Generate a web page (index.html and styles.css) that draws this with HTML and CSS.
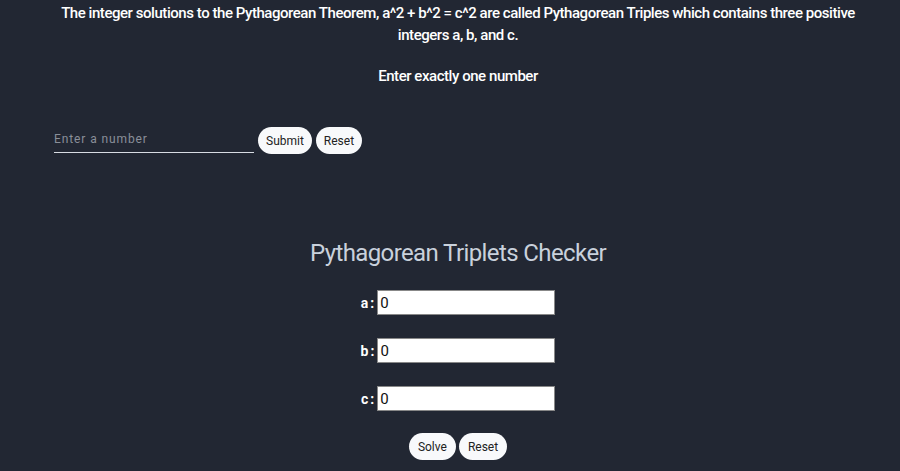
FILE: index.html
```html
<!DOCTYPE html>
<html>
<head>
<meta charset="utf-8">
<link rel="stylesheet" href="styles.css">
</head>
<body>
<p class="intro">The integer solutions to the Pythagorean Theorem, a^2 + b^2 = c^2 are called Pythagorean Triples which contains three positive integers a, b, and c.</p>
<p class="prompt">Enter exactly one number</p>
<div class="entry">
  <input class="num" type="text" placeholder="Enter a number">
  <button class="btn">Submit</button>
  <button class="btn">Reset</button>
</div>
<h1 class="title">Pythagorean Triplets Checker</h1>
<div class="field"><label class="lbl">a:</label><input class="box" type="text" value="0"></div>
<div class="field"><label class="lbl">b:</label><input class="box" type="text" value="0"></div>
<div class="field"><label class="lbl">c:</label><input class="box" type="text" value="0"></div>
<div class="actions">
  <button class="btn">Solve</button>
  <button class="btn">Reset</button>
</div>
</body>
</html>
```
FILE: styles.css
```css
html, body {
  margin: 0;
  padding: 0;
  background: #222733;
}
body {
  font-family: Roboto, "Liberation Sans", sans-serif;
  color: #ffffff;
  padding: 2px 22px 0 38px;
}
.intro {
  margin: 0;
  text-align: center;
  font-size: 15px;
  font-weight: 500;
  line-height: 22px;
  letter-spacing: -0.45px;
}
.prompt {
  margin: 19px 0 0;
  text-align: center;
  font-size: 15px;
  font-weight: 500;
  line-height: 22px;
  letter-spacing: -0.45px;
}
.entry {
  display: flex;
  align-items: flex-end;
  gap: 4px;
  margin: 40px 0 0 16px;
}
.num {
  width: 200px;
  height: 24px;
  box-sizing: border-box;
  background: transparent;
  border: none;
  border-bottom: 1px solid #d8dce3;
  color: #fff;
  font-family: Roboto, sans-serif;
  font-size: 12px;
  letter-spacing: 0.9px;
  padding: 0 0 3px;
  outline: none;
}
.num::placeholder { color: #8a8f99; }
.btn {
  background: #f8f9fb;
  color: #222;
  border: none;
  border-radius: 14px;
  height: 27px;
  padding: 0 8px;
  font-family: Roboto, sans-serif;
  font-size: 12px;
}
.entry .btn { margin-bottom: -1px; }
.title {
  margin: 84px 0 0;
  text-align: center;
  font-weight: 400;
  font-size: 24px;
  line-height: 32px;
  color: #c9d1dc;
  letter-spacing: -0.6px;
}
.field {
  display: flex;
  justify-content: center;
  align-items: center;
  margin-top: 21px;
}
.field + .field { margin-top: 23px; }
.lbl {
  font-family: Roboto, sans-serif;
  font-weight: bold;
  font-size: 14px;
  margin-right: 1px;
  letter-spacing: 2px;
}
.box {
  width: 178px;
  height: 25px;
  box-sizing: border-box;
  border: 1px solid #888;
  background: #fff;
  font-family: Roboto, sans-serif;
  font-size: 15px;
  padding: 0 2px;
  color: #111;
}
.actions {
  display: flex;
  justify-content: center;
  gap: 3px;
  margin-top: 22px;
}
.actions .btn { padding: 0 9px; }
```
